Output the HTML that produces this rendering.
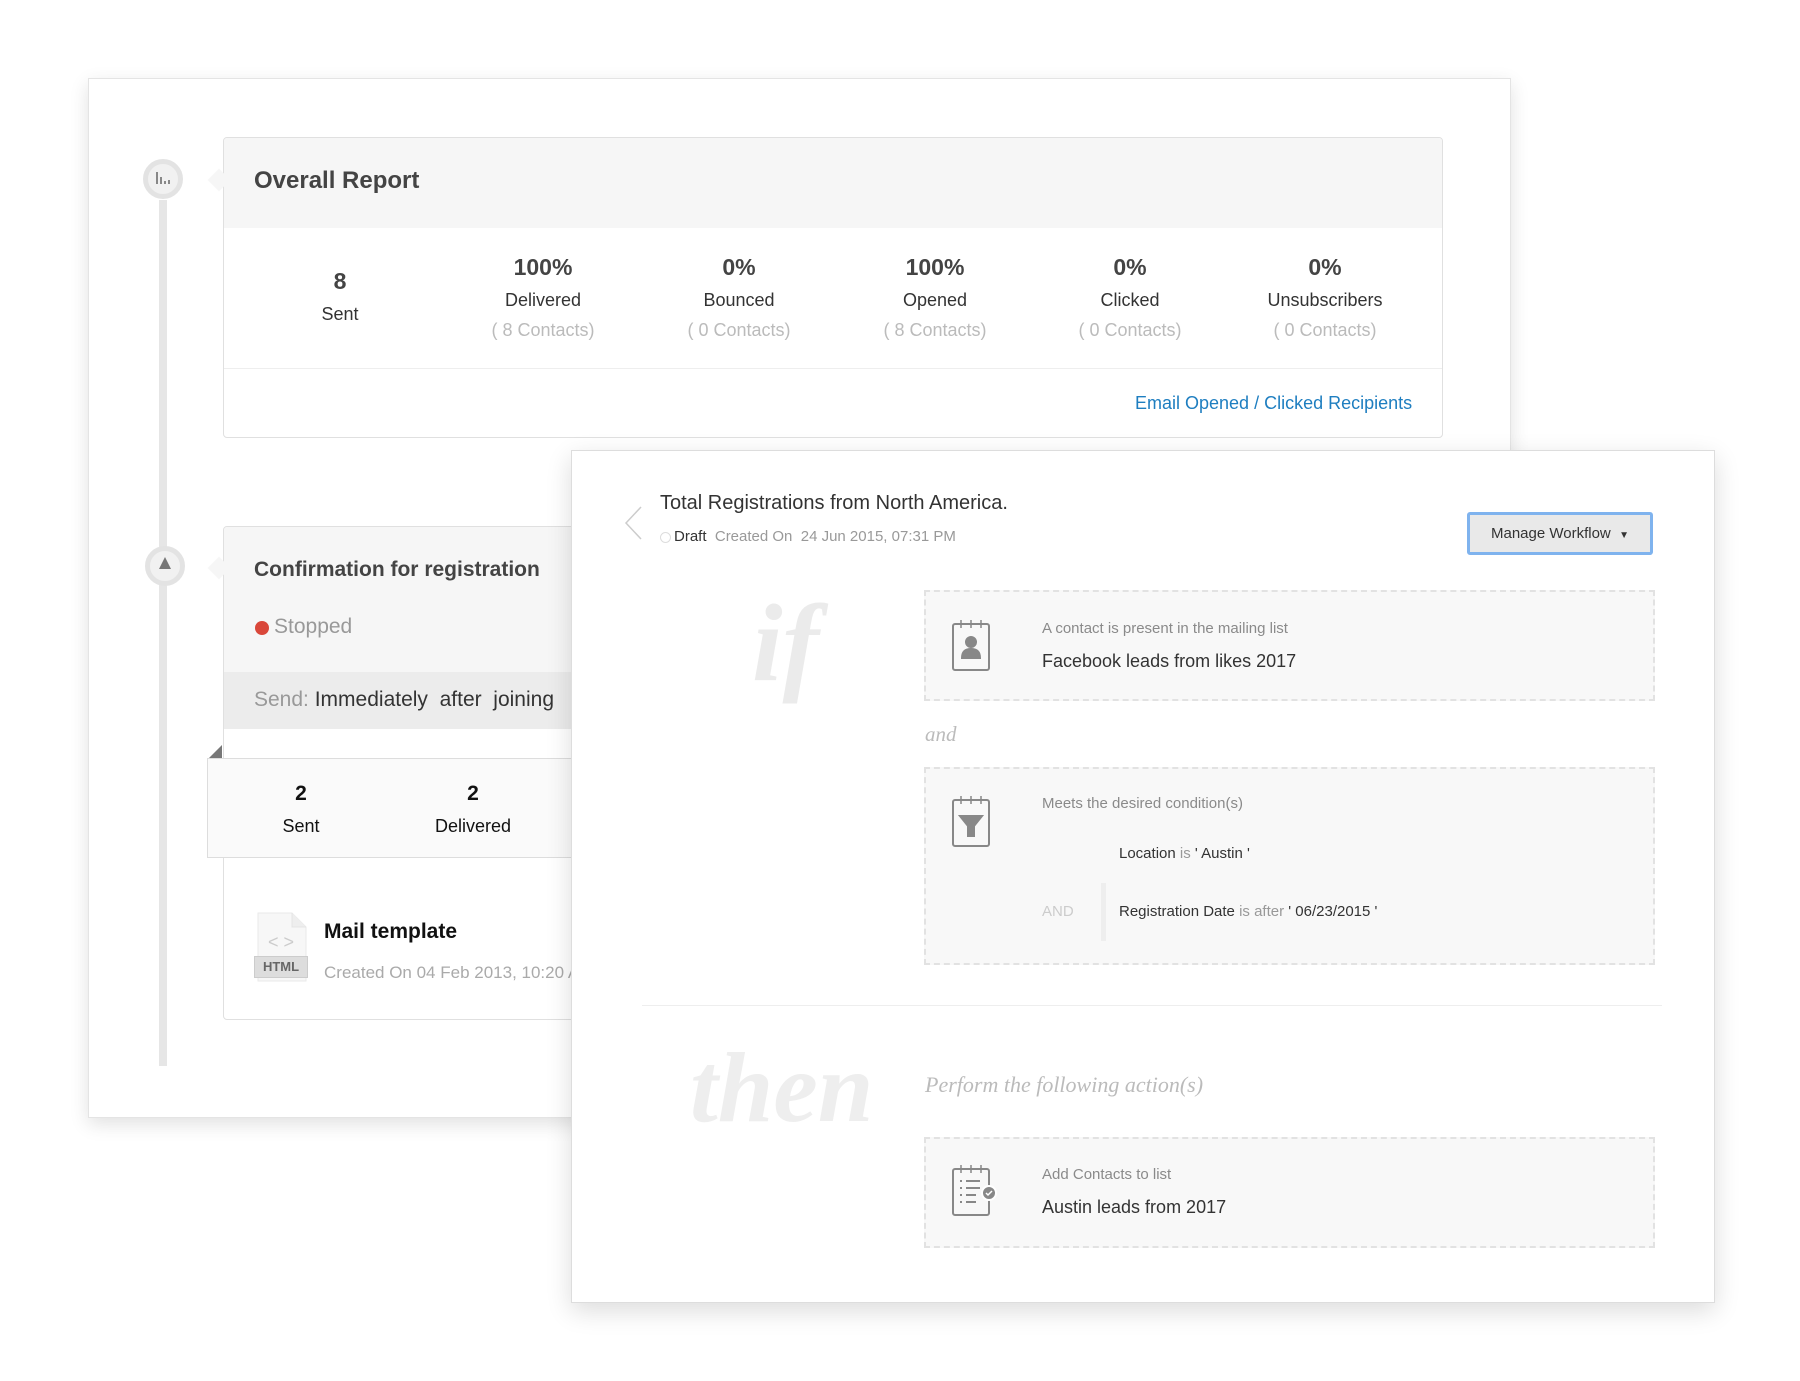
<!DOCTYPE html>
<html><head><meta charset="utf-8"><style>
*{margin:0;padding:0;box-sizing:border-box}
body{width:1800px;height:1381px;background:#fff;position:relative;overflow:hidden;font-family:"Liberation Sans",sans-serif;color:#333}
.a{position:absolute;white-space:nowrap}
.c{text-align:center;transform:translateX(-50%)}
.serif{font-family:"Liberation Serif",serif;font-style:italic}
.dash{position:absolute;border:2px dashed #e2e2e2;background:#f8f8f8}
.lbl{font-size:15px;color:#8a8a8a}
.val{font-size:18px;color:#333}
</style></head><body>
<div class="a" style="left:88px;top:78px;width:1423px;height:1040px;background:#fff;border:1px solid #e4e4e4;box-shadow:0 6px 18px rgba(0,0,0,.12)"></div>
<div class="a" style="left:159px;top:200px;width:8px;height:866px;background:#e6e6e6"></div>
<div class="a" style="left:143px;top:159px;width:40px;height:40px;border-radius:50%;background:#f1f1f1;border:5px solid #e3e3e3"></div>
<svg class="a" style="left:155px;top:171px" width="16" height="14" fill="#888"><rect x="1" y="1" width="2" height="12"/><rect x="5" y="6" width="2" height="7"/><rect x="9" y="10" width="2" height="3"/><rect x="13" y="9" width="2" height="4"/></svg>
<div class="a" style="left:145px;top:546px;width:40px;height:40px;border-radius:50%;background:#f1f1f1;border:5px solid #e3e3e3"></div>
<div class="a" style="left:159px;top:557px;width:0;height:0;border-left:6px solid transparent;border-right:6px solid transparent;border-bottom:12px solid #777"></div>
<div class="a" style="left:223px;top:137px;width:1220px;height:301px;border:1px solid #e0e0e0;border-radius:4px;background:#fff;overflow:hidden">
 <div style="height:90px;background:#f6f6f6"></div>
 <div style="position:absolute;left:0;right:0;top:230px;border-top:1px solid #eee"></div>
</div>
<div class="a" style="left:211px;top:172px;width:16px;height:16px;background:#f6f6f6;transform:rotate(45deg)"></div>
<div class="a" style="left:254px;top:167px;font-size:24px;font-weight:bold;color:#444">Overall Report</div>
<div class="a c" style="left:340px;top:268px;font-size:23px;font-weight:bold;color:#444">8</div>
<div class="a c" style="left:340px;top:304px;font-size:18px">Sent</div>
<div class="a c" style="left:543px;top:254px;font-size:23px;font-weight:bold;color:#444">100%</div>
<div class="a c" style="left:543px;top:290px;font-size:18px">Delivered</div>
<div class="a c" style="left:543px;top:320px;font-size:18px;color:#bbb">( 8 Contacts)</div>
<div class="a c" style="left:739px;top:254px;font-size:23px;font-weight:bold;color:#444">0%</div>
<div class="a c" style="left:739px;top:290px;font-size:18px">Bounced</div>
<div class="a c" style="left:739px;top:320px;font-size:18px;color:#bbb">( 0 Contacts)</div>
<div class="a c" style="left:935px;top:254px;font-size:23px;font-weight:bold;color:#444">100%</div>
<div class="a c" style="left:935px;top:290px;font-size:18px">Opened</div>
<div class="a c" style="left:935px;top:320px;font-size:18px;color:#bbb">( 8 Contacts)</div>
<div class="a c" style="left:1130px;top:254px;font-size:23px;font-weight:bold;color:#444">0%</div>
<div class="a c" style="left:1130px;top:290px;font-size:18px">Clicked</div>
<div class="a c" style="left:1130px;top:320px;font-size:18px;color:#bbb">( 0 Contacts)</div>
<div class="a c" style="left:1325px;top:254px;font-size:23px;font-weight:bold;color:#444">0%</div>
<div class="a c" style="left:1325px;top:290px;font-size:18px">Unsubscribers</div>
<div class="a c" style="left:1325px;top:320px;font-size:18px;color:#bbb">( 0 Contacts)</div>
<div class="a" style="left:1135px;top:393px;font-size:18px;color:#1e7ec0">Email Opened / Clicked Recipients</div>
<div class="a" style="left:223px;top:526px;width:500px;height:494px;border:1px solid #e0e0e0;border-radius:4px;background:#fff;overflow:hidden">
 <div style="height:145px;background:#f6f6f6"></div>
 <div style="height:57px;background:#ececec"></div>
</div>
<div class="a" style="left:211px;top:560px;width:16px;height:16px;background:#f6f6f6;transform:rotate(45deg)"></div>
<div class="a" style="left:254px;top:558px;font-size:21px;font-weight:bold;color:#444">Confirmation for registration</div>
<div class="a" style="left:255px;top:621px;width:14px;height:14px;border-radius:50%;background:#d9473a"></div>
<div class="a" style="left:274px;top:615px;font-size:21px;color:#999">Stopped</div>
<div class="a" style="left:254px;top:688px;font-size:21px;color:#333"><span style="color:#999">Send:</span> Immediately&nbsp; after&nbsp; joining</div>
<div class="a" style="left:207px;top:745px;width:0;height:0;border-left:15px solid transparent;border-bottom:15px solid #777"></div>
<div class="a" style="left:207px;top:758px;width:520px;height:100px;background:#fafafa;border:1px solid #ddd"></div>
<div class="a c" style="left:301px;top:782px;font-size:21px;font-weight:bold;color:#111">2</div>
<div class="a c" style="left:301px;top:816px;font-size:18px;color:#111">Sent</div>
<div class="a c" style="left:473px;top:782px;font-size:21px;font-weight:bold;color:#111">2</div>
<div class="a c" style="left:473px;top:816px;font-size:18px;color:#111">Delivered</div>
<svg class="a" style="left:254px;top:911px" width="56" height="72"><path d="M4 2h34l14 14v54H4z" fill="#f7f7f7" stroke="#eaeaea"/><path d="M38 2v14h14" fill="#eee" stroke="#e4e4e4"/></svg>
<div class="a" style="left:268px;top:932px;font-size:18px;color:#ccc">&lt; &gt;</div>
<div class="a" style="left:254px;top:956px;width:54px;height:22px;background:#ddd;border:1px solid #ccc;font-size:13px;font-weight:bold;color:#666;text-align:center;line-height:20px">HTML</div>
<div class="a" style="left:324px;top:920px;font-size:21px;font-weight:bold;color:#111">Mail template</div>
<div class="a" style="left:324px;top:963px;font-size:17px;color:#aaa">Created On 04 Feb 2013, 10:20 AM</div>
<div class="a" style="left:571px;top:450px;width:1144px;height:853px;background:#fff;border:1px solid #ddd;box-shadow:0 8px 24px rgba(0,0,0,.14)"></div>
<svg class="a" style="left:622px;top:505px" width="22" height="36"><path d="M19 2 L4 18 L19 34" fill="none" stroke="#ccc" stroke-width="1.5"/></svg>
<div class="a" style="left:660px;top:492px;font-size:20px;color:#333">Total Registrations from North America.</div>
<div class="a" style="left:660px;top:532px;width:11px;height:11px;border-radius:50%;border:1px solid #ddd"></div>
<div class="a" style="left:674px;top:528px;font-size:15px;color:#333">Draft <span style="color:#999">&nbsp;Created On &nbsp;24 Jun 2015, 07:31 PM</span></div>
<div class="a" style="left:1467px;top:512px;width:186px;height:43px;border:3px solid #7fb3ee;border-radius:3px;background:#e9e9e9;font-size:15px;color:#333;text-align:center;line-height:37px">Manage Workflow&nbsp; <span style="font-size:10px">▼</span></div>
<div class="a serif" style="left:752px;top:580px;font-size:110px;font-weight:bold;color:#ebebeb">if</div>
<div class="dash" style="left:924px;top:590px;width:731px;height:111px"></div>
<svg class="a" style="left:951px;top:618px" width="42" height="54" fill="none" stroke="#888" stroke-width="2"><rect x="2" y="6" width="36" height="46" rx="2"/><path d="M10 2v8M20 2v8M30 2v8" stroke-width="1.5"/><circle cx="20" cy="24" r="5" fill="#888"/><path d="M11 40q0-9 9-9q9 0 9 9z" fill="#888"/></svg>
<div class="a lbl" style="left:1042px;top:620px">A contact is present in the mailing list</div>
<div class="a val" style="left:1042px;top:651px">Facebook leads from likes 2017</div>
<div class="a serif" style="left:925px;top:722px;font-size:21px;color:#bbb">and</div>
<div class="dash" style="left:924px;top:767px;width:731px;height:198px"></div>
<svg class="a" style="left:951px;top:794px" width="42" height="54" fill="none" stroke="#888" stroke-width="2"><rect x="2" y="6" width="36" height="46" rx="2"/><path d="M10 2v8M20 2v8M30 2v8" stroke-width="1.5"/><path d="M9 22h22l-8 10v10h-6v-10z" fill="#888"/></svg>
<div class="a lbl" style="left:1042px;top:795px">Meets the desired condition(s)</div>
<div class="a" style="left:1119px;top:845px;font-size:15px;color:#333">Location <span style="color:#999">is</span> ' Austin '</div>
<div class="a" style="left:1042px;top:903px;font-size:15px;color:#ccc">AND</div>
<div class="a" style="left:1101px;top:883px;width:5px;height:58px;background:#eee"></div>
<div class="a" style="left:1119px;top:903px;font-size:15px;color:#333">Registration Date <span style="color:#999">is after</span> ' 06/23/2015 '</div>
<div class="a" style="left:642px;top:1005px;width:1020px;height:1px;background:#eee"></div>
<div class="a serif" style="left:690px;top:1030px;font-size:100px;font-weight:bold;color:#eeeeee">then</div>
<div class="a serif" style="left:925px;top:1072px;font-size:22px;color:#bbb">Perform the following action(s)</div>
<div class="dash" style="left:924px;top:1137px;width:731px;height:111px"></div>
<svg class="a" style="left:951px;top:1163px" width="48" height="54" fill="none" stroke="#888" stroke-width="2"><rect x="2" y="6" width="36" height="46" rx="2"/><path d="M10 2v8M20 2v8M30 2v8" stroke-width="1.5"/><path d="M9 18h2M15 18h14M9 25h2M15 25h14M9 32h2M15 32h10M9 39h2M15 39h10"/><circle cx="38" cy="30" r="7" fill="#888" stroke="#fff"/><path d="M35 30l2 2 4-4" stroke="#fff" stroke-width="1.5"/></svg>
<div class="a lbl" style="left:1042px;top:1166px">Add Contacts to list</div>
<div class="a val" style="left:1042px;top:1197px">Austin leads from 2017</div>
</body></html>
